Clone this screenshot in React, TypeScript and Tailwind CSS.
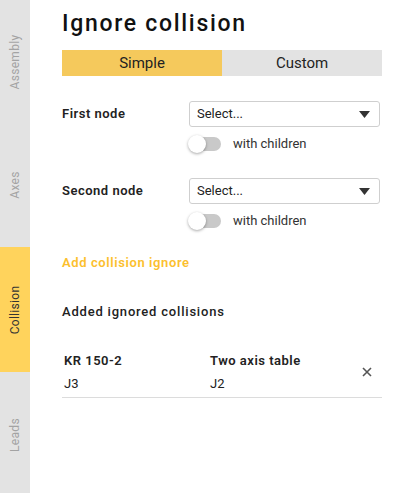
import { useState } from "react"

type Tab = { label: string; h: string }

const tabs: Tab[] = [
  { label: "Assembly", h: "h-[123px]" },
  { label: "Axes", h: "h-[124px]" },
  { label: "Collision", h: "h-[125px]" },
  { label: "Leads", h: "h-[125px]" },
]

function Toggle({ on, onClick }: { on: boolean; onClick: () => void }) {
  return (
    <button
      onClick={onClick}
      className={`relative w-[32px] h-[14px] rounded-full ${on ? "bg-[#f7c95c]" : "bg-[#c9c9c9]"}`}
    >
      <span
        className={`absolute top-1/2 -translate-y-1/2 w-[18px] h-[18px] rounded-full bg-white shadow-[0_1px_3px_rgba(0,0,0,0.35)] ${on ? "left-[15px]" : "-left-[1px]"}`}
      />
    </button>
  )
}

function NodeSelect({ label }: { label: string }) {
  const [children, setChildren] = useState(false)
  return (
    <div className="flex items-start">
      <div className="w-[127px] h-[26px] flex items-center text-[13px] font-semibold tracking-[0.5px] text-[#222]">
        {label}
      </div>
      <div className="flex flex-col">
        <div className="w-[191px] h-[26px] border border-[#cfcfcf] rounded-[3px] flex items-center justify-between pl-[7px] pr-[9px] text-[13px] text-[#222]">
          <span>Select...</span>
          <svg width="11" height="7" viewBox="0 0 11 7">
            <path d="M0 0 L11 0 L5.5 7 Z" fill="#333" />
          </svg>
        </div>
        <div className="flex items-center mt-[8px] gap-[12px] h-[18px]">
          <Toggle on={children} onClick={() => setChildren(!children)} />
          <span className="text-[13px] text-[#333]">with children</span>
        </div>
      </div>
    </div>
  )
}

export default function App() {
  const [mode, setMode] = useState<"simple" | "custom">("simple")

  return (
    <div className="flex w-[411px] h-[493px] overflow-hidden bg-white font-['Roboto',sans-serif]">
      {/* Sidebar tabs */}
      <div className="w-[30px] shrink-0 flex flex-col bg-[#e3e3e3]">
        {tabs.map((t) => (
          <div
            key={t.label}
            className={`${t.h} shrink-0 flex items-center justify-center ${t.label === "Collision" ? "bg-[#ffd35c] text-[#333]" : "text-[#a3a3a3]"}`}
          >
            <span className="-rotate-90 whitespace-nowrap text-[12px] tracking-[0.3px]">{t.label}</span>
          </div>
        ))}
      </div>

      {/* Main panel */}
      <div className="flex-1 pl-[32px] pr-[29px] pt-[9px]">
        <h1 className="text-[23px] font-medium tracking-[1.7px] text-[#111] leading-[30px]">Ignore collision</h1>

        <div className="flex mt-[11px] h-[26px]">
          <button
            onClick={() => setMode("simple")}
            className={`flex-1 text-[15px] ${mode === "simple" ? "bg-[#f5c95c]" : "bg-[#e3e3e3]"} text-[#222]`}
          >
            Simple
          </button>
          <button
            onClick={() => setMode("custom")}
            className={`flex-1 text-[15px] ${mode === "custom" ? "bg-[#f5c95c]" : "bg-[#e3e3e3]"} text-[#222]`}
          >
            Custom
          </button>
        </div>

        <div className="mt-[25px]">
          <NodeSelect label="First node" />
        </div>
        <div className="mt-[25px]">
          <NodeSelect label="Second node" />
        </div>

        <button className="mt-[23px] h-[20px] text-[13px] font-semibold tracking-[0.6px] text-[#fcbf2e]">
          Add collision ignore
        </button>

        <div className="mt-[27px] h-[20px] flex items-center text-[13px] font-medium tracking-[0.8px] text-[#222]">
          Added ignored collisions
        </div>

        <div className="mt-[30px] flex items-center border-b border-[#dcdcdc] pb-[4px]">
          <div className="w-[148px] pl-[2px]">
            <div className="text-[13px] font-semibold tracking-[0.5px] text-[#222]">KR 150-2</div>
            <div className="text-[13px] text-[#222] mt-[3px]">J3</div>
          </div>
          <div className="flex-1">
            <div className="text-[13px] font-semibold tracking-[0.5px] text-[#222]">Two axis table</div>
            <div className="text-[13px] text-[#222] mt-[3px]">J2</div>
          </div>
          <button className="mr-[10px] text-[#555]">
            <svg width="10" height="10" viewBox="0 0 10 10">
              <path d="M1 1 L9 9 M9 1 L1 9" stroke="#555" strokeWidth="1.6" />
            </svg>
          </button>
        </div>
      </div>
    </div>
  )
}
